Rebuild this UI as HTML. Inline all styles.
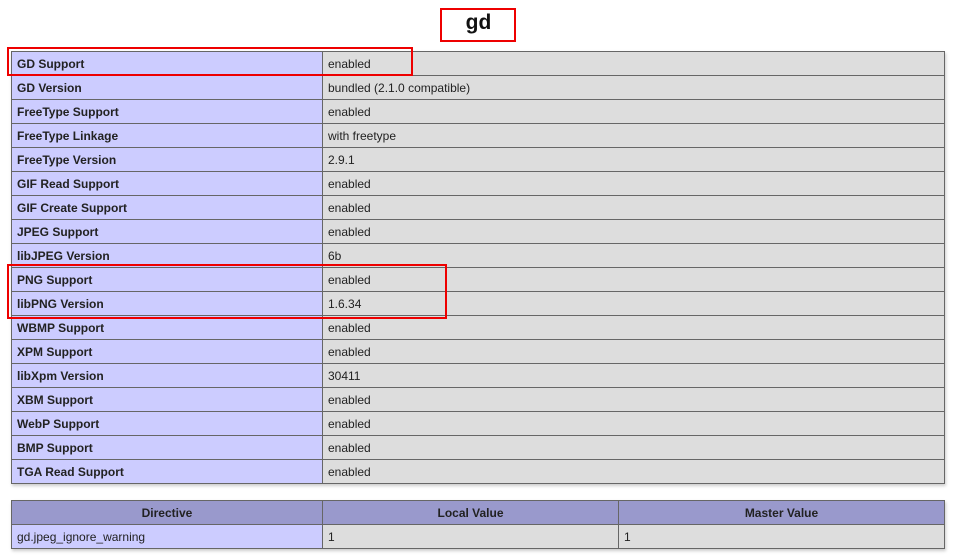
<!DOCTYPE html>
<html><head><style>
body{margin:0;background:#fff;font-family:"Liberation Sans",Arial,sans-serif;font-size:12px;color:#222;width:957px;height:556px;position:relative;overflow:hidden}
h2{position:absolute;left:0;width:957px;top:11px;margin:0;text-align:center;font-size:21px;font-weight:bold;line-height:24px;color:#111}
table{position:absolute;left:11px;width:934px;border-collapse:collapse;box-shadow:1px 2px 3px #ccc}
td,th{border:1px solid #666;height:23px;padding:0 5px;vertical-align:middle;text-align:left}
.e{background:#ccf;font-weight:bold;width:300px}
.v{background:#ddd}
th{background:#99c;font-weight:bold;text-align:center}
.r{position:absolute;border:2px solid #e00;box-sizing:border-box}
</style></head><body>
<h2>gd</h2>
<table style="top:51px">
<tr><td class="e">GD Support</td><td class="v">enabled</td></tr>
<tr><td class="e">GD Version</td><td class="v">bundled (2.1.0 compatible)</td></tr>
<tr><td class="e">FreeType Support</td><td class="v">enabled</td></tr>
<tr><td class="e">FreeType Linkage</td><td class="v">with freetype</td></tr>
<tr><td class="e">FreeType Version</td><td class="v">2.9.1</td></tr>
<tr><td class="e">GIF Read Support</td><td class="v">enabled</td></tr>
<tr><td class="e">GIF Create Support</td><td class="v">enabled</td></tr>
<tr><td class="e">JPEG Support</td><td class="v">enabled</td></tr>
<tr><td class="e">libJPEG Version</td><td class="v">6b</td></tr>
<tr><td class="e">PNG Support</td><td class="v">enabled</td></tr>
<tr><td class="e">libPNG Version</td><td class="v">1.6.34</td></tr>
<tr><td class="e">WBMP Support</td><td class="v">enabled</td></tr>
<tr><td class="e">XPM Support</td><td class="v">enabled</td></tr>
<tr><td class="e">libXpm Version</td><td class="v">30411</td></tr>
<tr><td class="e">XBM Support</td><td class="v">enabled</td></tr>
<tr><td class="e">WebP Support</td><td class="v">enabled</td></tr>
<tr><td class="e">BMP Support</td><td class="v">enabled</td></tr>
<tr><td class="e">TGA Read Support</td><td class="v">enabled</td></tr>
</table>
<table style="top:500px">
<tr><th style="width:300px">Directive</th><th style="width:285px">Local Value</th><th>Master Value</th></tr>
<tr><td class="e" style="font-weight:normal">gd.jpeg_ignore_warning</td><td class="v">1</td><td class="v">1</td></tr>
</table>
<div class="r" style="left:440px;top:8px;width:76px;height:34px"></div>
<div class="r" style="left:7px;top:47px;width:406px;height:29px"></div>
<div class="r" style="left:7px;top:264px;width:440px;height:55px"></div>
</body></html>
